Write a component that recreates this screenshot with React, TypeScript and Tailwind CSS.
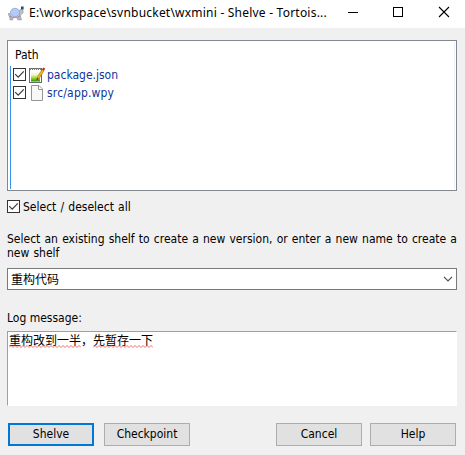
import type { ReactNode } from 'react';

function Check() {
  return (
    <svg width="13" height="13" viewBox="0 0 13 13" className="mb-[1px] block shrink-0">
      <rect x="0.5" y="0.5" width="12" height="12" fill="#fff" stroke="#333" />
      <path d="M2.2 6.2 5.2 9.2 10.8 3.4" fill="none" stroke="#3c3c3c" strokeWidth="1.2" />
    </svg>
  );
}

function Turtle() {
  return (
    <svg width="16" height="16" viewBox="0 0 16 16" className="block shrink-0">
      <path d="M0 7.5 2 7.5 3 10.5 1.2 10.5zM1.5 10.5 5.5 11.5 4.5 14 2 14zM8.5 11.5l4-1.5 1 4H10z" fill="#b9b9bb" stroke="#8e8e94" strokeWidth=".5" />
      <path d="M10.5 6.5 12 3.5 15 4 15.2 7 13 8.5 12.5 10.5 11 10z" fill="#bfc0c2" stroke="#96969c" strokeWidth=".5" />
      <ellipse cx="7" cy="6.5" rx="4.5" ry="4.2" fill="#b3cbfb" stroke="#8fa0cf" strokeWidth=".8" />
      <path d="M2 10Q7 13.2 11.8 9.8" fill="none" stroke="#9696a0" />
      <rect x="13" y="0.5" width="2.6" height="3" fill="#244e68" />
    </svg>
  );
}

function NotepadIcon() {
  return (
    <svg width="17" height="16" viewBox="0 0 17 16" className="block shrink-0">
      <defs>
        <linearGradient id="pad" x1="0" y1="0" x2="0" y2="1">
          <stop offset="0" stopColor="#fff" />
          <stop offset=".35" stopColor="#f0f8cf" />
          <stop offset=".65" stopColor="#a4dc2c" />
          <stop offset="1" stopColor="#258c16" />
        </linearGradient>
      </defs>
      <rect x="0.5" y="1.5" width="12" height="14" fill="#fff" stroke="#666b66" />
      <rect x="2" y="4" width="9" height="10.5" fill="url(#pad)" />
      <path d="M1 2H12" stroke="#777" strokeWidth="2" strokeDasharray="1 1" />
      <path d="M7.8 12.5 8.4 10 13 2.6 15 3.8 10.2 11.4z" fill="#f3b61d" stroke="#855f13" strokeWidth=".5" />
      <path d="M13 2.6 14.2.5 16.2 1.6 15 3.8z" fill="#b52d25" />
      <path d="M7.6 12.8 8 11 9.4 11.9z" fill="#292015" />
    </svg>
  );
}

function FileIcon() {
  return (
    <svg width="17" height="16" viewBox="0 0 17 16" className="block shrink-0">
      <path d="M2.5.5H10L13.5 4V15.5H2.5z" fill="#f8f8f8" stroke="#949494" />
      <path d="M9.5 1V4.5H13.5" fill="#fff" stroke="#949494" />
    </svg>
  );
}

function FileRow({ icon, children }: { icon: ReactNode; children: ReactNode }) {
  return (
    <div className="flex h-[18px] items-center pl-[2px]">
      <Check />
      <div className="ml-[3px]">{icon}</div>
      <span className="ml-[1px] text-[#0c369b]">{children}</span>
    </div>
  );
}

function Misspelled({ width, children }: { width: number; children: ReactNode }) {
  const points = Array.from({ length: width / 2 + 1 }, (_, i) => `${i * 2},${i % 2 ? 0.5 : 2.5}`).join(' ');
  return (
    <span className="relative inline-block">
      {children}
      <svg width={width} height="3" className="absolute bottom-[-1px] left-0 block">
        <polyline points={points} fill="none" stroke="#f04a4a" strokeWidth=".8" />
      </svg>
    </span>
  );
}

function Button({ primary = false, children }: { primary?: boolean; children: ReactNode }) {
  return (
    <button
      className={
        primary
          ? 'h-[23px] w-[86px] border-2 border-[#0078d7] bg-[#e1e1e1] leading-[19px]'
          : 'h-[23px] w-[86px] border border-[#adadad] bg-[#e1e1e1] leading-[21px]'
      }
    >
      {children}
    </button>
  );
}

export default function App() {
  return (
    <div className="h-[455px] w-[465px] overflow-hidden bg-[#f0f0f0] font-['DejaVu_Sans_Condensed','Noto_Sans','Noto_Sans_CJK_SC',sans-serif] text-[12px] leading-[14px] whitespace-nowrap text-black">
      <header className="flex h-7 items-center bg-white pl-2">
        <Turtle />
        <span className="ml-[5px] w-[307px] pb-[2px] font-['Noto_Sans',sans-serif] text-[12px] leading-4 tracking-[0.22px]">
          E:\workspace\svnbucket\wxmini - Shelve - Tortois...
        </span>
        <svg width="129" height="28" viewBox="0 0 129 28" className="block shrink-0" fill="none" stroke="#000">
          <path d="M12 12.5H22" />
          <rect x="57.5" y="7.5" width="9" height="9" />
          <path d="M103 7 113 17M113 7 103 17" strokeWidth="1.1" />
        </svg>
      </header>

      <main className="px-[7px] pt-3">
        <section className="h-[151px] w-[450px] border border-[#828790] bg-white p-[1px]">
          <div className="h-full border-r border-[#e9f0f7]">
            <div className="h-6 pt-[6px] pl-[6px]">Path</div>
            <div className="ml-[1px] h-[123px] border-l border-[#3392ee]">
              <FileRow icon={<NotepadIcon />}>package.json</FileRow>
              <FileRow icon={<FileIcon />}>
                <span className="tracking-[0.18px]">src/app.wpy</span>
              </FileRow>
            </div>
          </div>
        </section>

        <label className="mt-[9px] flex h-[14px] items-center">
          <Check />
          <span className="ml-[3px] [word-spacing:0.75px]">Select / deselect all</span>
        </label>

        <p className="mt-[18px] h-7 [word-spacing:0.75px]">
          Select an existing shelf to create a new version, or enter a new name to create a
          <br />
          new shelf
        </p>

        <div className="mt-2 flex h-[22px] w-[450px] items-center justify-between border border-[#7a7a7a] bg-white pr-[3px] pl-[3px]">
          <span className="font-['Noto_Sans_CJK_SC',sans-serif]">重构代码</span>
          <svg width="10" height="6" viewBox="0 0 10 6" className="block">
            <path d="M1 .8 5 4.8 9 .8" fill="none" stroke="#505050" strokeWidth="1.2" />
          </svg>
        </div>

        <div className="mt-[21px] h-5">Log message:</div>
        <div className="h-[75px] w-[450px] border border-t-[#a0a0a0] border-r-white border-b-white border-l-[#a0a0a0] bg-white pt-[1px] pl-[1px] font-['Noto_Sans_CJK_SC',sans-serif]" lang="zh-CN">
          <Misspelled width={72}>重构改到一半</Misspelled>，<Misspelled width={60}>先暂存一下</Misspelled>
        </div>

        <footer className="mt-[17px] flex pl-[1px]">
          <Button primary>Shelve</Button>
          <div className="ml-[10px]">
            <Button>Checkpoint</Button>
          </div>
          <div className="ml-[86px] flex gap-2">
            <Button>Cancel</Button>
            <Button>Help</Button>
          </div>
        </footer>
      </main>
    </div>
  );
}
